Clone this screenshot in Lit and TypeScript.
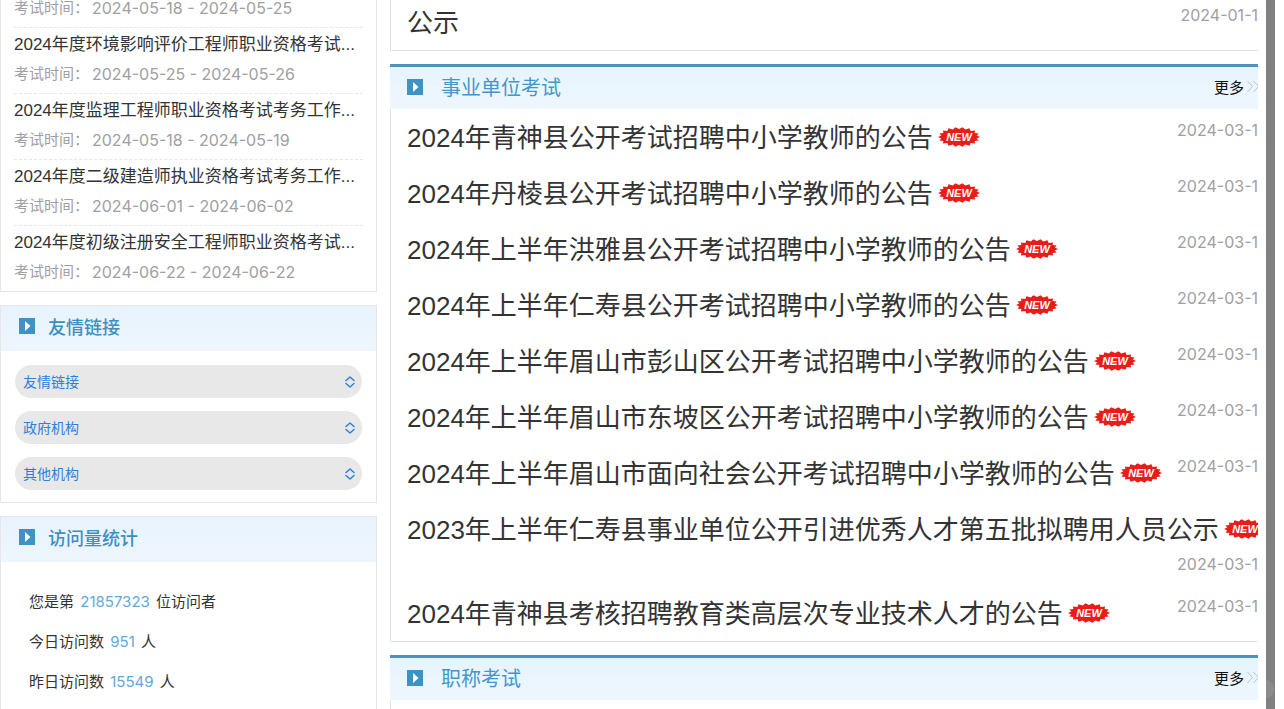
import { LitElement, html, css, svg } from "lit";
import { customElement, property } from "lit/decorators.js";

interface Exam {
  title?: string;
  dates: string;
}

interface Notice {
  title: string;
  date: string;
  isNew?: boolean;
  wide?: boolean;
}

const exams: Exam[] = [
  { dates: "2024-05-18 - 2024-05-25" },
  { title: "2024年度环境影响评价工程师职业资格考试...", dates: "2024-05-25 - 2024-05-26" },
  { title: "2024年度监理工程师职业资格考试考务工作...", dates: "2024-05-18 - 2024-05-19" },
  { title: "2024年度二级建造师执业资格考试考务工作...", dates: "2024-06-01 - 2024-06-02" },
  { title: "2024年度初级注册安全工程师职业资格考试...", dates: "2024-06-22 - 2024-06-22" },
];

const linkGroups = ["友情链接", "政府机构", "其他机构"];

const stats = [
  { before: "您是第", value: "21857323", after: "位访问者" },
  { before: "今日访问数", value: "951", after: "人" },
  { before: "昨日访问数", value: "15549", after: "人" },
];

const notices: Notice[] = [
  { title: "2024年青神县公开考试招聘中小学教师的公告", date: "2024-03-1", isNew: true },
  { title: "2024年丹棱县公开考试招聘中小学教师的公告", date: "2024-03-1", isNew: true },
  { title: "2024年上半年洪雅县公开考试招聘中小学教师的公告", date: "2024-03-1", isNew: true },
  { title: "2024年上半年仁寿县公开考试招聘中小学教师的公告", date: "2024-03-1", isNew: true },
  { title: "2024年上半年眉山市彭山区公开考试招聘中小学教师的公告", date: "2024-03-1", isNew: true },
  { title: "2024年上半年眉山市东坡区公开考试招聘中小学教师的公告", date: "2024-03-1", isNew: true },
  { title: "2024年上半年眉山市面向社会公开考试招聘中小学教师的公告", date: "2024-03-1", isNew: true },
  { title: "2023年上半年仁寿县事业单位公开引进优秀人才第五批拟聘用人员公示", date: "2024-03-1", isNew: true, wide: true },
  { title: "2024年青神县考核招聘教育类高层次专业技术人才的公告", date: "2024-03-1", isNew: true },
];

// Jagged outline of the "NEW" starburst: alternating outer and inner radii.
const burst = Array.from({ length: 36 }, (_, i) => {
  const a = (i / 36) * Math.PI * 2;
  const outer = i % 2 === 0;
  const x = 21 + Math.cos(a) * (outer ? 21 : 18);
  const y = 10 + Math.sin(a) * (outer ? 10 : 8);
  return `${x.toFixed(1)},${y.toFixed(1)}`;
}).join(" ");

const marker = html`<svg class="marker" viewBox="0 0 16 16" aria-hidden="true">
  <rect width="16" height="16" fill="#3f92c6" />
  <path d="M6 3 L11.5 8 L6 13 Z" fill="#fff" />
</svg>`;

const base = css`
  * {
    box-sizing: border-box;
  }
  h2,
  p,
  ul {
    margin: 0;
    padding: 0;
    font-weight: 400;
  }
  ul {
    list-style: none;
  }
  a {
    color: inherit;
    text-decoration: none;
  }
  .marker {
    display: block;
    flex: none;
    width: 16px;
    height: 16px;
  }
`;

@customElement("side-panel")
class SidePanel extends LitElement {
  @property() heading = "";

  static styles = [
    base,
    css`
      :host {
        display: block;
        border: 1px solid #e6e6e6;
        background: #fff;
      }
      .head {
        display: flex;
        align-items: center;
        gap: 13px;
        height: 45px;
        padding: 0 18px 5px;
        background: linear-gradient(#e8f3fe, #eef6fd);
      }
      h2 {
        color: #3d8fc3;
        font-size: 18px;
        font-weight: 500;
      }
    `,
  ];

  render() {
    return html`
      ${this.heading ? html`<div class="head">${marker}<h2>${this.heading}</h2></div>` : ""}
      <slot></slot>
    `;
  }
}

@customElement("notice-panel")
class NoticePanel extends LitElement {
  @property() heading = "";
  @property({ attribute: false }) items: Notice[] = [];

  static styles = [
    base,
    css`
      :host {
        display: block;
      }
      .head {
        display: flex;
        align-items: center;
        height: 45px;
        padding: 0 0 3px 17px;
        border-top: 3px solid #4a94bf;
        background: linear-gradient(#e6f4fe, #eff7fe);
      }
      h2 {
        flex: 1;
        margin-left: 18px;
        color: #4596c8;
        font-size: 20px;
      }
      .more {
        display: flex;
        align-items: center;
        gap: 3px;
        color: #111;
        font-size: 15px;
      }
      .chevrons {
        display: block;
        width: 11px;
        height: 13px;
      }
      .list {
        min-height: 56px;
        border-left: 1px solid #e2e2e2;
        border-bottom: 1px solid #e2e2e2;
      }
      .row {
        display: flex;
        justify-content: space-between;
        align-items: flex-start;
        padding-left: 16px;
        white-space: nowrap;
      }
      .title {
        display: flex;
        align-items: center;
        gap: 5px;
        height: 56px;
        color: #333;
        font-family: "Liberation Sans", "Noto Sans CJK SC", sans-serif;
        font-size: 26px;
      }
      .label {
        padding-bottom: 4px;
      }
      .date {
        color: #a0a0a0;
        font-size: 16px;
        line-height: 42px;
      }
      .wide {
        flex-direction: column;
        padding-bottom: 14px;
      }
      .wide .date {
        align-self: flex-end;
        line-height: 14px;
      }
      .badge {
        flex: none;
        width: 42px;
        height: 20px;
      }
      .badge text {
        font: italic 700 11px "Liberation Sans", sans-serif;
      }
    `,
  ];

  private badge() {
    return html`<svg class="badge" viewBox="0 0 42 20" role="img" aria-label="NEW">
      ${svg`<polygon points=${burst} fill="#ea1c18" />
      <text x="21" y="14" text-anchor="middle" fill="#fff">NEW</text>`}
    </svg>`;
  }

  render() {
    return html`
      ${this.heading
        ? html`<div class="head">
            ${marker}
            <h2>${this.heading}</h2>
            <a class="more" href="#more">
              更多
              <svg class="chevrons" viewBox="0 0 11 13" fill="none" stroke="#b9c2ca" aria-hidden="true">
                <path d="M0.5 1 L5.5 6.5 L0.5 12 M6.5 1 L11.5 6.5 L6.5 12" />
              </svg>
            </a>
          </div>`
        : ""}
      <ul class="list">
        ${this.items.map(
          (n) => html`<li class="row ${n.wide ? "wide" : ""}">
            <a class="title" href="#notice"><span class="label">${n.title}</span>${n.isNew ? this.badge() : ""}</a>
            <span class="date">${n.date}</span>
          </li>`,
        )}
      </ul>
    `;
  }
}

@customElement("app-root")
class AppRoot extends LitElement {
  static styles = [
    base,
    css`
      :host {
        display: flex;
        height: 100vh;
        overflow: hidden;
        background: #fff;
        color: #333;
        font-family: Inter, "Noto Sans CJK SC", sans-serif;
      }
      .side,
      .main {
        display: flex;
        flex-direction: column;
        gap: 13px;
        margin-top: -6px;
      }
      .side {
        flex: none;
        width: 377px;
        margin-right: 13px;
      }
      .main {
        flex: 1;
        min-width: 0;
        overflow: hidden;
      }
      .track {
        flex: none;
        width: 9px;
        margin: 0 9px 0 8px;
        background: radial-gradient(circle 10px at -2px calc(100% - 20px), #8c8c8c 95%, #808080);
      }
      .first {
        border-top: 0;
      }
      .exams {
        padding: 0 13px;
      }
      .exam {
        padding-bottom: 5px;
        border-bottom: 1px dashed #e6e6e6;
        white-space: nowrap;
      }
      .exam:last-child {
        border-bottom: 0;
      }
      .name {
        display: block;
        padding-top: 2px;
        font-family: "Liberation Sans", "Noto Sans CJK SC", sans-serif;
        font-size: 17px;
        line-height: 30px;
      }
      .when {
        display: flex;
        gap: 3px;
        color: #a0a0a0;
        font-size: 15px;
        line-height: 28px;
      }
      .range {
        font-size: 16px;
      }
      .links {
        display: grid;
        gap: 13px;
        padding: 14px 14px 12px;
      }
      .field {
        display: grid;
        align-items: center;
      }
      .field > * {
        grid-area: 1 / 1;
      }
      select {
        appearance: none;
        width: 100%;
        height: 33px;
        padding: 0 8px;
        border: 0;
        border-radius: 17px;
        background: #e8e8e9;
        color: #2f7fdc;
        font: inherit;
        font-size: 14px;
      }
      .arrows {
        justify-self: end;
        width: 10px;
        height: 12px;
        margin-right: 7px;
        pointer-events: none;
      }
      .stats {
        padding: 20px 28px;
        font-size: 15px;
        line-height: 40px;
      }
      .value {
        margin: 0 2px;
        color: #62aad4;
      }
    `,
  ];

  render() {
    return html`
      <aside class="side">
        <side-panel class="first">
          <ul class="exams">
            ${exams.map(
              (e) => html`<li class="exam">
                ${e.title ? html`<a class="name" href="#exam">${e.title}</a>` : ""}
                <p class="when"><span>考试时间：</span><span class="range">${e.dates}</span></p>
              </li>`,
            )}
          </ul>
        </side-panel>
        <side-panel heading="友情链接">
          <div class="links">
            ${linkGroups.map(
              (g) => html`<div class="field">
                <select aria-label=${g}>
                  <option>${g}</option>
                </select>
                <svg class="arrows" viewBox="0 0 10 12" fill="none" stroke="#2f7fdc" stroke-width="1.5" stroke-linecap="round" stroke-linejoin="round" aria-hidden="true">
                  <path d="M1 4.5 L5 1 L9 4.5 M1 7.5 L5 11 L9 7.5" />
                </svg>
              </div>`,
            )}
          </div>
        </side-panel>
        <side-panel heading="访问量统计">
          <div class="stats">
            ${stats.map((s) => html`<p>${s.before} <span class="value">${s.value}</span> ${s.after}</p>`)}
          </div>
        </side-panel>
      </aside>
      <main class="main">
        <notice-panel .items=${[{ title: "公示", date: "2024-01-1" }]}></notice-panel>
        <notice-panel heading="事业单位考试" .items=${notices}></notice-panel>
        <notice-panel heading="职称考试"></notice-panel>
      </main>
      <div class="track"></div>
    `;
  }
}
